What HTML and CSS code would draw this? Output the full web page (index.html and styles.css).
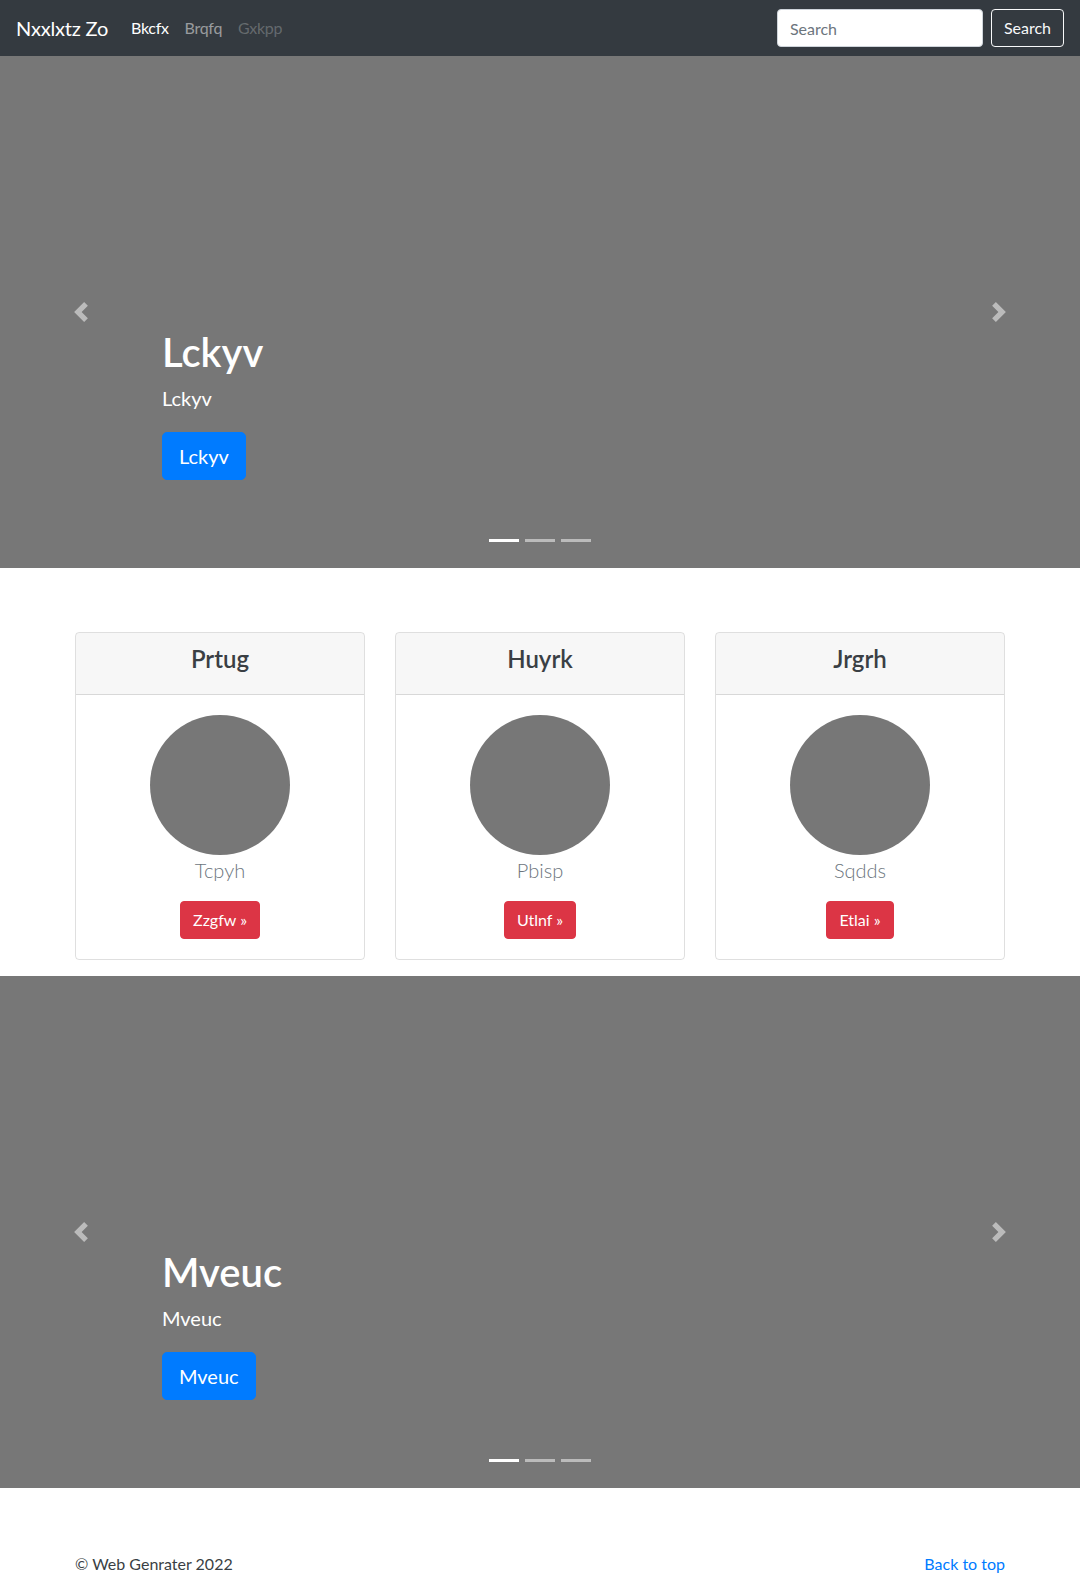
FILE: index.html
```html
<!DOCTYPE html>
<html lang="en">
<head>
<meta charset="utf-8">
<title>Carousel</title>
<link rel="stylesheet" href="styles.css">
</head>
<body>
<header class="navbar">
  <a class="brand" href="#">Nxxlxtz Zo</a>
  <nav class="nav">
    <a class="nav-link active" href="#">Bkcfx</a>
    <a class="nav-link" href="#">Brqfq</a>
    <a class="nav-link disabled" href="#">Gxkpp</a>
  </nav>
  <form class="search">
    <input class="search-input" type="text" placeholder="Search">
    <button class="btn-outline" type="button">Search</button>
  </form>
</header>

<main>
  <section class="carousel">
    <ol class="indicators">
      <li class="active"></li>
      <li></li>
      <li></li>
    </ol>
    <div class="caption">
      <h1 class="caption-title">Lckyv</h1>
      <p class="caption-text">Lckyv</p>
      <p class="caption-text"><a class="btn-primary" href="#">Lckyv</a></p>
    </div>
    <a class="control control-prev" href="#"><svg width="20" height="20" viewBox="0 0 8 8"><path d="M5.25 0l-4 4 4 4 1.5-1.5L4.25 4l2.5-2.5L5.25 0z" fill="#fff"/></svg></a>
    <a class="control control-next" href="#"><svg width="20" height="20" viewBox="0 0 8 8"><path d="M2.75 0l-1.5 1.5L3.75 4l-2.5 2.5L2.75 8l4-4-4-4z" fill="#fff"/></svg></a>
  </section>

  <section class="cards">
    <div class="card">
      <div class="card-header"><h4 class="card-title">Prtug</h4></div>
      <div class="card-body">
        <div class="circle"></div>
        <p class="lead">Tcpyh</p>
        <a class="btn-danger" href="#">Zzgfw »</a>
      </div>
    </div>
    <div class="card">
      <div class="card-header"><h4 class="card-title">Huyrk</h4></div>
      <div class="card-body">
        <div class="circle"></div>
        <p class="lead">Pbisp</p>
        <a class="btn-danger" href="#">Utlnf »</a>
      </div>
    </div>
    <div class="card">
      <div class="card-header"><h4 class="card-title">Jrgrh</h4></div>
      <div class="card-body">
        <div class="circle"></div>
        <p class="lead">Sqdds</p>
        <a class="btn-danger" href="#">Etlai »</a>
      </div>
    </div>
  </section>

  <section class="carousel">
    <ol class="indicators">
      <li class="active"></li>
      <li></li>
      <li></li>
    </ol>
    <div class="caption">
      <h1 class="caption-title">Mveuc</h1>
      <p class="caption-text">Mveuc</p>
      <p class="caption-text"><a class="btn-primary" href="#">Mveuc</a></p>
    </div>
    <a class="control control-prev" href="#"><svg width="20" height="20" viewBox="0 0 8 8"><path d="M5.25 0l-4 4 4 4 1.5-1.5L4.25 4l2.5-2.5L5.25 0z" fill="#fff"/></svg></a>
    <a class="control control-next" href="#"><svg width="20" height="20" viewBox="0 0 8 8"><path d="M2.75 0l-1.5 1.5L3.75 4l-2.5 2.5L2.75 8l4-4-4-4z" fill="#fff"/></svg></a>
  </section>

  <footer class="footer">
    <p class="footer-text">© Web Genrater 2022</p>
    <p class="footer-text"><a class="link" href="#">Back to top</a></p>
  </footer>
</main>
</body>
</html>
```

FILE: styles.css
```css
* { box-sizing: border-box; }
html, body { margin: 0; padding: 0; }
body {
  font-family: Lato, "Open Sans", "Liberation Sans", sans-serif;
  font-size: 16px;
  line-height: 1.5;
  color: #212529;
  background: #fff;
}
a { text-decoration: none; }

.navbar {
  height: 56px;
  background: #343a40;
  display: flex;
  align-items: center;
  padding: 8px 16px;
}
.brand {
  color: #fff;
  font-size: 20px;
  line-height: 30px;
  margin-right: 15px;
  padding: 5px 0;
  letter-spacing: -0.2px;
}
.nav { display: flex; flex: 1; }
.nav-link {
  padding: 8px;
  color: rgba(255,255,255,.5);
  line-height: 24px;
  letter-spacing: -0.3px;
}
.nav-link.active { color: #fff; }
.nav-link.disabled { color: rgba(255,255,255,.25); }
.search { display: flex; gap: 8px; }
.search-input {
  width: 206px;
  height: 38px;
  padding: 6px 12px;
  font: inherit;
  font-size: 16px;
  color: #495057;
  background: #fff;
  border: 1px solid #ced4da;
  border-radius: 4px;
}
.search-input::placeholder { color: #6c757d; }
.btn-outline {
  height: 38px;
  padding: 6px 12px;
  font: inherit;
  font-size: 16px;
  color: #f8f9fa;
  background: transparent;
  border: 1px solid #f8f9fa;
  border-radius: 4px;
}

.carousel {
  position: relative;
  height: 512px;
  background: #777;
  margin-bottom: 64px;
}
.indicators {
  position: absolute;
  left: 15%;
  right: 15%;
  bottom: 0;
  margin: 0 0 16px;
  padding: 0;
  list-style: none;
  display: flex;
  justify-content: center;
}
.indicators li {
  width: 30px;
  height: 3px;
  margin: 10px 3px;
  background: #fff;
  opacity: .5;
}
.indicators li.active { opacity: 1; }
.caption {
  position: absolute;
  left: 15%;
  right: 15%;
  bottom: 48px;
  padding: 20px 0;
  color: #fff;
  z-index: 10;
}
.caption-title {
  margin: 0 0 8px;
  font-size: 40px;
  font-weight: 600;
  line-height: 1.2;
}
.caption-text {
  margin: 0 0 20px;
  font-size: 20px;
  line-height: 1.4;
}
.btn-primary {
  display: inline-block;
  padding: 8px 16px;
  font-size: 20px;
  line-height: 30px;
  color: #fff;
  background: #007bff;
  border: 1px solid #007bff;
  border-radius: 5px;
  height: 48px;
  vertical-align: top;
}
.control {
  position: absolute;
  top: 0;
  bottom: 0;
  width: 15%;
  display: flex;
  align-items: center;
  justify-content: center;
  opacity: .5;
}
.control svg { display: block; }
.control-prev { left: 0; }
.control-next { right: 0; }

.cards {
  width: 930px;
  margin: 0 auto 16px;
  display: grid;
  grid-template-columns: repeat(3, 1fr);
  gap: 30px;
}
.card {
  border: 1px solid rgba(0,0,0,.125);
  border-radius: 4px;
  overflow: hidden;
}
.card-header {
  padding: 12px 20px;
  background: rgba(0,0,0,.03);
  border-bottom: 1px solid rgba(0,0,0,.125);
  text-align: center;
}
.card-title {
  margin: 0 0 8px;
  font-size: 24px;
  font-weight: 600;
  line-height: 1.2;
  color: #3a3f44;
}
.card-body {
  padding: 20px;
  display: flex;
  flex-direction: column;
  align-items: center;
}
.circle {
  width: 140px;
  height: 140px;
  border-radius: 50%;
  background: #777;
}
.lead {
  margin: 0 0 16px;
  font-size: 20px;
  font-weight: 300;
  line-height: 30px;
  color: #6c757d;
}
.btn-danger {
  display: inline-block;
  padding: 6px 12px;
  font-size: 16px;
  line-height: 24px;
  color: #fff;
  background: #dc3545;
  border: 1px solid #dc3545;
  border-radius: 4px;
}

.footer {
  width: 930px;
  margin: 0 auto;
  display: flex;
  justify-content: space-between;
}
.footer-text { margin: 0 0 16px; color: #3a3f44; }
.link { color: #007bff; }
```
